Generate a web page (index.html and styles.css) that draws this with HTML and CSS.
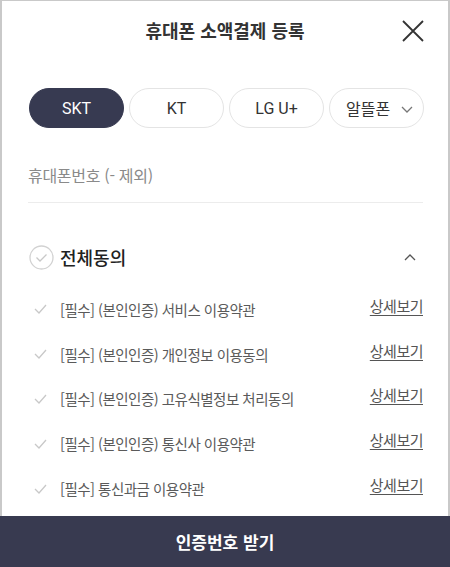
FILE: index.html
```html
<!DOCTYPE html>
<html lang="ko">
<head>
<meta charset="utf-8">
<link rel="stylesheet" href="styles.css">
</head>
<body>
<div class="frame">
  <header class="head">
    <h1 class="title">휴대폰 소액결제 등록</h1>
    <button class="close" aria-label="닫기">
      <svg width="22" height="22" viewBox="0 0 22 22"><path d="M1 1L21 21M21 1L1 21" stroke="#333" stroke-width="1.8" fill="none"/></svg>
    </button>
  </header>
  <div class="carriers">
    <div class="pill active">SKT</div>
    <div class="pill">KT</div>
    <div class="pill">LG U+</div>
    <div class="pill sel">알뜰폰
      <svg class="chev" width="12" height="8" viewBox="0 0 12 8"><path d="M1 1L6 6L11 1" stroke="#777" stroke-width="1.3" fill="none"/></svg>
    </div>
  </div>
  <div class="phone">휴대폰번호 (- 제외)</div>
  <div class="all">
    <span class="circle">
      <svg width="25" height="25" viewBox="0 0 25 25"><circle cx="12.5" cy="12.5" r="11.5" stroke="#d2d2d2" stroke-width="1.3" fill="none"/><path d="M7.5 12.5L11 16L17.5 9.5" stroke="#c8c8c8" stroke-width="1.3" fill="none"/></svg>
    </span>
    <span class="all-label">전체동의</span>
    <svg class="up" width="12" height="8" viewBox="0 0 12 8"><path d="M1 7L6 2L11 7" stroke="#555" stroke-width="1.3" fill="none"/></svg>
  </div>
  <ul class="terms">
    <li class="term"><svg class="tick" width="13" height="10" viewBox="0 0 13 10"><path d="M1 5L5 9L12 1" stroke="#c8c8c8" stroke-width="1.3" fill="none"/></svg><span class="t-text">[필수] (본인인증) 서비스 이용약관</span><a class="more">상세보기</a></li>
    <li class="term"><svg class="tick" width="13" height="10" viewBox="0 0 13 10"><path d="M1 5L5 9L12 1" stroke="#c8c8c8" stroke-width="1.3" fill="none"/></svg><span class="t-text">[필수] (본인인증) 개인정보 이용동의</span><a class="more">상세보기</a></li>
    <li class="term"><svg class="tick" width="13" height="10" viewBox="0 0 13 10"><path d="M1 5L5 9L12 1" stroke="#c8c8c8" stroke-width="1.3" fill="none"/></svg><span class="t-text">[필수] (본인인증) 고유식별정보 처리동의</span><a class="more">상세보기</a></li>
    <li class="term"><svg class="tick" width="13" height="10" viewBox="0 0 13 10"><path d="M1 5L5 9L12 1" stroke="#c8c8c8" stroke-width="1.3" fill="none"/></svg><span class="t-text">[필수] (본인인증) 통신사 이용약관</span><a class="more">상세보기</a></li>
    <li class="term"><svg class="tick" width="13" height="10" viewBox="0 0 13 10"><path d="M1 5L5 9L12 1" stroke="#c8c8c8" stroke-width="1.3" fill="none"/></svg><span class="t-text">[필수] 통신과금 이용약관</span><a class="more">상세보기</a></li>
  </ul>
  <button class="submit">인증번호 받기</button>
</div>
</body>
</html>
```
FILE: styles.css
```css
* { box-sizing: border-box; margin: 0; padding: 0; }
html, body { width: 450px; height: 567px; overflow: hidden; background: #fff; }
body { font-family: "Noto Sans CJK KR", "Noto Sans", sans-serif; color: #333; }
.frame {
  width: 450px; height: 567px;
  border: 2px solid #c9c9c9; border-top-width: 1px; border-bottom: 0;
  display: flex; flex-direction: column;
  position: relative;
}
.head { height: 58px; display: flex; align-items: center; justify-content: center; position: relative; }
.title { font-size: 18px; font-weight: 700; color: #333; letter-spacing: 0; }
.close { position: absolute; right: 24px; top: 19px; background: none; border: 0; width: 22px; height: 22px; }
.close svg { display: block; }
.carriers { display: flex; gap: 5px; padding: 29px 0 0 27px; }
.pill {
  width: 95px; height: 40px; border-radius: 20px;
  border: 1px solid #e4e4e4; display: flex; align-items: center; justify-content: center;
  font-size: 16px; color: #333; font-family: Roboto, "Noto Sans CJK KR", sans-serif;
}
.pill.active { background: #373a51; border-color: #373a51; color: #fff; }
.pill.sel { justify-content: flex-start; padding-left: 16px; position: relative; font-family: "Noto Sans CJK KR", sans-serif; }
.pill.sel .chev { position: absolute; right: 10px; top: 17px; }
.phone { margin: 27px 25px 0 26px; height: 48px; border-bottom: 1px solid #ececec; font-size: 16px; color: #8a8a8a; padding-top: 9px; line-height: 22px; letter-spacing: -0.3px; }
.all { display: flex; align-items: center; margin: 40px 29px 0 27px; height: 28px; }
.circle { width: 25px; height: 25px; display: block; }
.circle svg { display: block; }
.all-label { font-size: 18px; font-weight: 500; color: #222; margin-left: 6px; }
.up { margin-left: auto; margin-right: 3px; }
.terms { list-style: none; margin: 16px 25px 0 32px; }
.term { display: flex; align-items: center; height: 44.8px; }
.tick { flex: none; }
.t-text { font-size: 14.5px; color: #5a5a5a; margin-left: 13px; letter-spacing: -0.5px; }
.more { margin-left: auto; font-size: 15px; color: #555; text-decoration: underline; text-underline-offset: 3px; margin-top: -8px; letter-spacing: -0.5px; }
.submit {
  position: absolute; left: -2px; right: -2px; bottom: 0; height: 51px;
  background: #383a50; border: 0; color: #fff; font-size: 17px; font-weight: 700;
  font-family: "Noto Sans CJK KR", sans-serif;
}
```
